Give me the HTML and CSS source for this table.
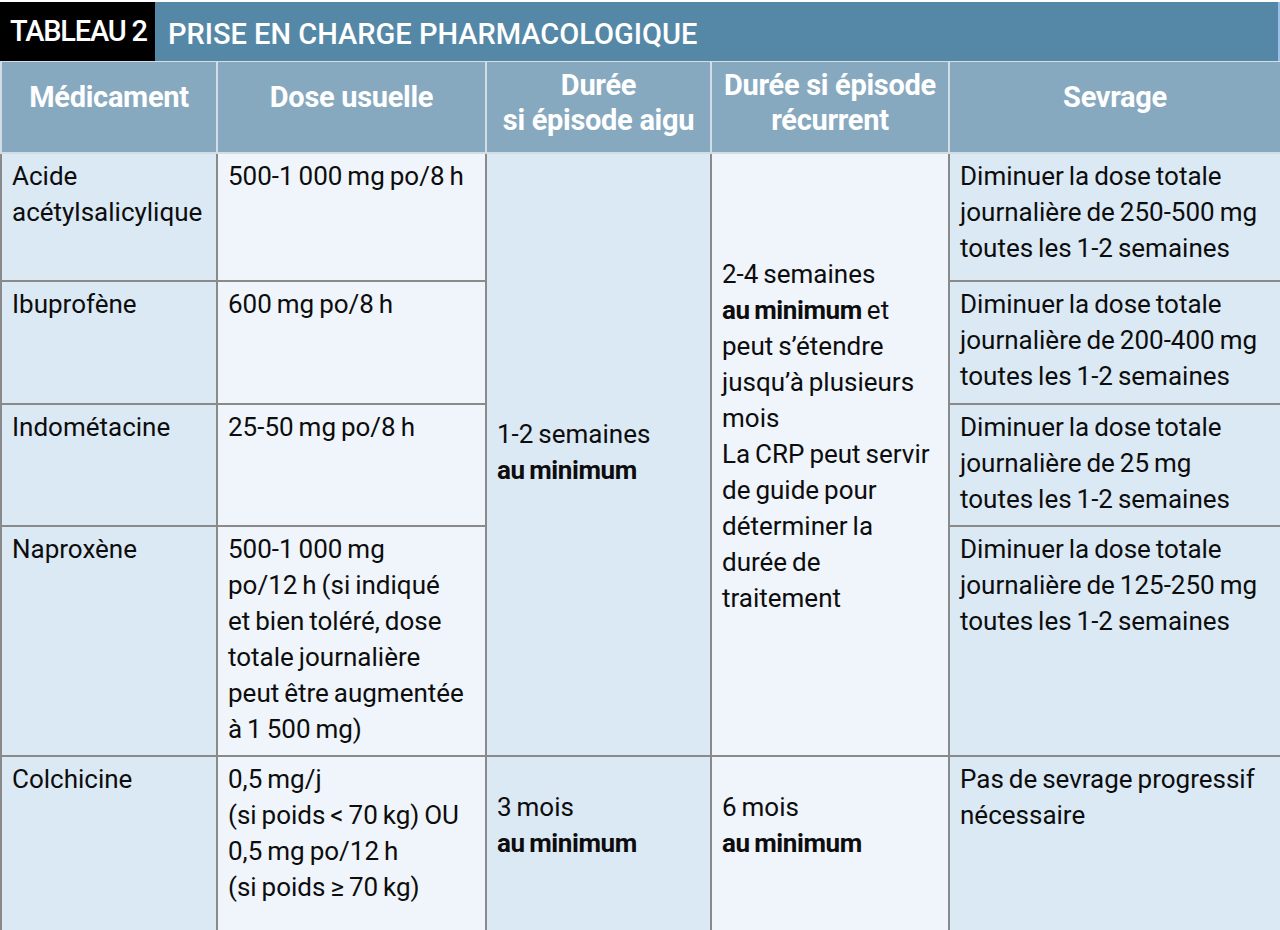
FILE: index.html
```html
<!DOCTYPE html>
<html lang="fr">
<head>
<meta charset="utf-8">
<title>Tableau 2</title>
<link rel="stylesheet" href="styles.css">
</head>
<body>
<div class="page">
  <div class="titlebar">
    <div class="tag">TABLEAU 2</div>
    <div class="title">PRISE EN CHARGE PHARMACOLOGIQUE</div>
  </div>
  <table class="grid">
    <colgroup>
      <col class="c1"><col class="c2"><col class="c3"><col class="c4"><col class="c5">
    </colgroup>
    <thead>
      <tr class="head">
        <th class="one">Médicament</th>
        <th class="one">Dose usuelle</th>
        <th class="two">Durée<br>si épisode aigu</th>
        <th class="two">Durée si épisode<br>récurrent</th>
        <th class="one">Sevrage</th>
      </tr>
    </thead>
    <tbody>
      <tr class="r1">
        <td class="dark">Acide<br>acétylsalicylique</td>
        <td class="light">500-1 000 mg po/8 h</td>
        <td class="dark mid" rowspan="4">1-2 semaines<br><b>au minimum</b></td>
        <td class="light mid shift" rowspan="4">2-4 semaines<br><b>au minimum</b> et<br>peut s’étendre<br>jusqu’à plusieurs<br>mois<br>La CRP peut servir<br>de guide pour<br>déterminer la<br>durée de<br>traitement</td>
        <td class="dark">Diminuer la dose totale<br>journalière de 250-500 mg<br>toutes les 1-2 semaines</td>
      </tr>
      <tr class="r2">
        <td class="dark">Ibuprofène</td>
        <td class="light">600 mg po/8 h</td>
        <td class="dark">Diminuer la dose totale<br>journalière de 200-400 mg<br>toutes les 1-2 semaines</td>
      </tr>
      <tr class="r3">
        <td class="dark">Indométacine</td>
        <td class="light">25-50 mg po/8 h</td>
        <td class="dark">Diminuer la dose totale<br>journalière de 25 mg<br>toutes les 1-2 semaines</td>
      </tr>
      <tr class="r4">
        <td class="dark">Naproxène</td>
        <td class="light">500-1 000 mg<br>po/12 h (si indiqué<br>et bien toléré, dose<br>totale journalière<br>peut être augmentée<br>à 1 500 mg)</td>
        <td class="dark">Diminuer la dose totale<br>journalière de 125-250 mg<br>toutes les 1-2 semaines</td>
      </tr>
      <tr class="r5">
        <td class="dark">Colchicine</td>
        <td class="light">0,5 mg/j<br>(si poids &lt; 70 kg) OU<br>0,5 mg po/12 h<br>(si poids ≥ 70 kg)</td>
        <td class="dark low">3 mois<br><b>au minimum</b></td>
        <td class="light low">6 mois<br><b>au minimum</b></td>
        <td class="dark">Pas de sevrage progressif<br>nécessaire</td>
      </tr>
    </tbody>
  </table>
</div>
</body>
</html>
```

FILE: styles.css
```css
html, body {
  margin: 0;
  padding: 0;
  background: #ffffff;
}

.page {
  width: 1280px;
  padding-top: 2px;
  overflow: hidden;
}

.titlebar {
  display: flex;
  height: 59px;
  background: #5588a7;
  border-right: 2px solid #9cc0ea;
}

.tag {
  width: 155px;
  background: #000000;
  color: #ffffff;
  font-family: Roboto, "Liberation Sans", sans-serif;
  font-weight: 500;
  font-size: 29px;
  letter-spacing: -1.2px;
  line-height: 59px;
  padding-left: 10px;
  box-sizing: border-box;
}

.title {
  color: #ffffff;
  font-family: Roboto, "Liberation Sans", sans-serif;
  font-weight: 500;
  font-size: 29px;
  letter-spacing: 0;
  line-height: 64px;
  padding-left: 13px;
}

.grid {
  width: 1280px;
  border-collapse: collapse;
  table-layout: fixed;
}

.c1 { width: 216px; }
.c2 { width: 269px; }
.c3 { width: 225px; }
.c4 { width: 238px; }
.c5 { width: 332px; }

.head th {
  height: 91px;
  background: #87a9c0;
  color: #ffffff;
  font-family: Roboto, "Liberation Sans", sans-serif;
  font-weight: 700;
  font-size: 29px;
  line-height: 35px;
  letter-spacing: -0.3px;
  text-align: center;
  vertical-align: middle;
  border: 2px solid #d3dde5;
  border-top: 1px solid #d3dde5;
  padding: 0 4px;
  box-sizing: border-box;
}

.head th.one { padding-bottom: 18px; }
.head th.two { padding-bottom: 7px; }

td {
  font-family: Roboto, "Liberation Sans", sans-serif;
  font-size: 26px;
  letter-spacing: 0;
  word-spacing: -1.5px;
  line-height: 36px;
  color: #0d0d0d;
  vertical-align: top;
  text-align: left;
  padding: 4px 2px 8px 10px;
  border: 2px solid #8a8a8a;
}

td b {
  font-weight: 700;
  letter-spacing: -0.4px;
}

.dark { background: #dbe9f4; }
.light { background: #eff5fb; }

.mid { vertical-align: middle; }
.shift { padding-bottom: 40px; }
.low { padding-top: 32px; }

.r1 td { height: 114px; }
.r2 td { height: 109px; }
.r3 td { height: 108px; }
.r4 td { height: 216px; }
.r5 td { height: 170px; }
```
